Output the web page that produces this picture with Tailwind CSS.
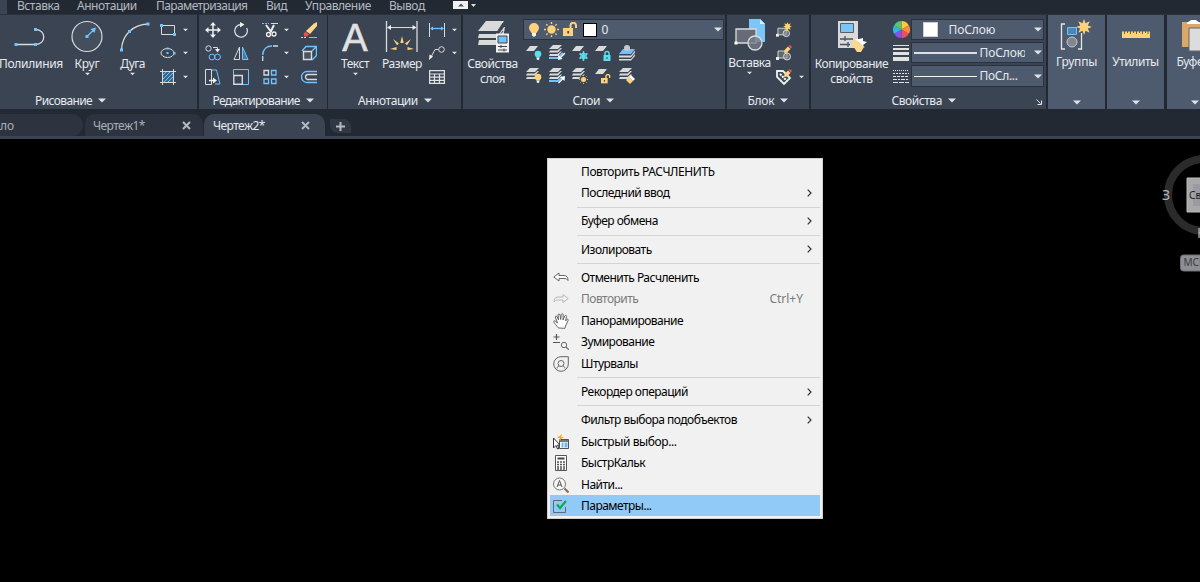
<!DOCTYPE html>
<html lang="ru">
<head>
    <meta charset="UTF-8">
    <meta name="viewport" content="width=device-width, initial-scale=1.0">
    <title>Чертеж2</title>
    <script src="https://cdn.jsdelivr.net/npm/@tailwindcss/browser@4"></script>
</head>
<body class="bg-black overflow-hidden h-[582px] w-[1200px] relative font-['Noto_Sans','Open_Sans',sans-serif] text-[12px] leading-[14px] tracking-[-0.45px] text-[#e6e9ee] whitespace-nowrap">

    <!-- shared shapes -->
    <svg class="hidden">
        <symbol id="caret" viewBox="0 0 8 5"><path d="M0 0.5h8L4 4.5z" fill="#dfe2e6"/></symbol>
        <symbol id="sheet" viewBox="0 0 12 5"><path d="M4 0h8L8 5H0z" fill="#dadada"/></symbol>
        <symbol id="stack" viewBox="0 0 13 13"><g fill="#dadada"><path d="M4 0h9L9 4H0z"/><path d="M1 5.500h7.500l3-2.500h1.500L9 7.500H0z"/><path d="M1 9h7.500l3-2.500h1.500L9 11H0z"/></g></symbol>
        <symbol id="bulb" viewBox="0 0 12 16"><path d="M6 1a5 5 0 0 0-5 5c0 2 1.500 3 2.500 5h5c1-2 2.500-3 2.500-5a5 5 0 0 0-5-5z" fill="currentColor"/><path d="M4 11h4v2.500L6 15l-2-1.500z" fill="#f4f4f4"/></symbol>
        <symbol id="sun" viewBox="0 0 16 16"><circle cx="8" cy="8" r="4.500" fill="#ffd27a"/><path d="M8 0v2M8 14v2M0 8h2M14 8h2M2.500 2.500l1.300 1.300M12.200 12.200l1.300 1.300M2.500 13.500l1.300-1.300M12.200 3.800l1.300-1.300" stroke="#ffd27a" stroke-width="1.500"/></symbol>
        <symbol id="unlock" viewBox="0 0 15 15"><path d="M0 6h10v8H0z" fill="#ffd27a"/><path d="M7.500 7V3.500a2.500 2.500 0 0 1 5.500 0V6" fill="none" stroke="#ffd27a" stroke-width="2"/><path d="M4.300 9h1.800v2.500H4.300z" fill="#4a4a44"/></symbol>
        <symbol id="block" viewBox="0 0 16 12"><path d="M2 2h9v7H2z" fill="#5f6773" stroke="#d4d4d4"/><circle cx="11" cy="7.500" r="3.500" fill="#8f949b" fill-opacity=".6" stroke="#d4d4d4"/><path d="M0 8h3v3H0z" fill="#eee"/></symbol>
        <symbol id="pencil" viewBox="0 0 8 8"><path d="M0 8l.5-3L4 1.500 6.500 4 3 7.500z" fill="#ffd27a"/><path d="M4.500 1L6 0l2 2-1 1.500z" fill="#f0504a"/></symbol>
        <symbol id="spark" viewBox="0 0 16 16"><path d="M8 0l1.500 4.200L13.700 2.300 11.800 6.500 16 8l-4.200 1.500 1.900 4.200-4.200-1.900L8 16l-1.500-4.200-4.200 1.900 1.900-4.200L0 8l4.200-1.500-1.900-4.200 4.200 1.900z" fill="#ffd27a"/></symbol>
    </svg>

    <!-- ribbon tab titles -->
    <div class="flex h-[14px] pl-[7px] bg-[#3b4453]">
        <div class="flex flex-1 h-[14px] bg-[#222933] text-[#b4b9c1] leading-[11px] pl-[10px]">
            <span class="w-[60px]">Вставка</span>
            <span class="w-[79px]">Аннотации</span>
            <span class="w-[110px] tracking-[-0.6px]">Параметризация</span>
            <span class="w-[39px]">Вид</span>
            <span class="w-[84px]">Управление</span>
            <span class="w-[64px]">Вывод</span>
            <svg class="w-[24px] h-[10px]" viewBox="0 0 24 10"><path d="M0 1h15v8H0z" fill="#f2f2f2"/><path d="M5 6.500h6L8 3.500z" fill="#555"/><path d="M18 4h5l-2.500 3z" fill="#dfe2e6"/></svg>
        </div>
    </div>

    <!-- ribbon -->
    <div class="flex h-[100px] bg-[#222933] border-t border-[#2b323d]">

        <div class="w-[197px] h-[94px] shrink-0 bg-[#3b4453] mr-[1.500px] flex flex-col">
            <div class="flex h-[78px] pt-[3px]">
                <div class="w-[62px] flex flex-col items-center pt-px">
                    <svg class="w-[36px] h-[37px] mb-px shrink-0" viewBox="0 0 36 37"><path d="M3 25.500h19.500c11 0 11-15 0-15" fill="none" stroke="#d8dadd" stroke-width="1.300"/><path d="M1.500 24h3v3h-3zM21 24h3v3h-3zM21 9h3v3h-3z" fill="#6fc3ff"/></svg>
                    <span class="tracking-[-0.3px]">Полилиния</span>
                </div>
                <div class="w-[50px] flex flex-col items-center pt-px">
                    <svg class="w-[36px] h-[37px] mb-px shrink-0" viewBox="0 0 36 37"><circle cx="18" cy="17.500" r="15" fill="#454e5c" stroke="#d8dadd" stroke-width="1.200"/><path d="M18 17.500l7-7" stroke="#6fc3ff" stroke-width="1.200"/><path d="M16.500 16h3v3h-3zM27 8.500l-1.500 5.500-4-4z" fill="#6fc3ff"/></svg>
                    <span class="tracking-[-0.2px]">Круг</span>
                    <svg class="w-[5px] h-[4px] mt-[1px]"><use href="#caret"/></svg>
                </div>
                <div class="w-[41px] flex flex-col items-center pt-px">
                    <svg class="w-[36px] h-[37px] mb-px shrink-0" viewBox="0 0 36 37"><path d="M6.500 31C7 16 18 5.500 33 5" fill="none" stroke="#d8dadd" stroke-width="1.300"/><path d="M5 29.500h3v3H5zM13 11h3v3h-3zM31.500 3.500h3v3h-3z" fill="#6fc3ff"/></svg>
                    <span class="tracking-[-0.7px]">Дуга</span>
                    <svg class="w-[5px] h-[4px] mt-[1px]"><use href="#caret"/></svg>
                </div>
                <div class="pl-[7px] flex flex-col">
                    <div class="flex items-center h-[23.500px] gap-[7px]"><svg class="size-4" viewBox="0 0 16 16"><path d="M1.500 3.500h13v9h-13z" fill="none" stroke="#d8dadd"/><path d="M0 2h3v3H0zM13 11h3v3h-3z" fill="#6fc3ff"/></svg><svg class="w-[5px] h-[4px]"><use href="#caret"/></svg></div>
                    <div class="flex items-center h-[23.500px] gap-[7px]"><svg class="size-4" viewBox="0 0 16 16"><ellipse cx="7.500" cy="8" rx="6.500" ry="4.500" fill="none" stroke="#d8dadd"/><path d="M6.500 2.500h2v2h-2zM6.500 7h2v2h-2zM13 7h2.500v2.500H13z" fill="#6fc3ff"/></svg><svg class="w-[5px] h-[4px]"><use href="#caret"/></svg></div>
                    <div class="flex items-center h-[23.500px] gap-[7px]"><svg class="size-4" viewBox="0 0 16 16"><path d="M3 3h10v10H3z" fill="#38648a"/><path d="M3 6l3-3M3 10l7-7M4 13l9-9M8 13l5-5" stroke="#6fc3ff"/><path d="M2.500 0v16M13.500 0v16M0 2.500h16M0 13.500h16" stroke="#d8dadd"/></svg><svg class="w-[5px] h-[4px]"><use href="#caret"/></svg></div>
                </div>
            </div>
            <div class="flex items-center h-[15px] pl-[35px] gap-[6px]"><span class="tracking-[-0.6px]">Рисование</span><svg class="w-[8px] h-[5px]"><use href="#caret"/></svg></div>
        </div>

        <div class="w-[128px] h-[94px] shrink-0 bg-[#3b4453] mr-[1.500px] flex flex-col">
            <div class="grid grid-cols-[28px_29px_40px_20px] grid-rows-[23.5px_23.5px_23.5px] items-center h-[78px] pt-[3px] pl-[6px]">
                <svg class="size-4" viewBox="0 0 16 16"><path d="M8 2v12M2 8h12" stroke="#f0f0f0" stroke-width="1.500"/><path d="M8 0l3 3.500H5zM8 16l3-3.500H5zM0 8l3.500-3v6zM16 8l-3.500-3v6z" fill="#f0f0f0"/></svg>
                <svg class="size-4" viewBox="0 0 16 16"><path d="M8 2.500a6.300 6.300 0 1 0 5.700 3.500" fill="none" stroke="#d8dadd" stroke-width="1.300"/><path d="M7 0l4.500 2.500L7 5.500z" fill="#eee"/></svg>
                <div class="flex items-center gap-[6px]"><svg class="size-4" viewBox="0 0 16 16"><path d="M0 1.500h7" stroke="#6fc3ff" stroke-dasharray="2 1"/><path d="M9 1.500h7" stroke="#d8dadd"/><path d="M4 3l5.500 7.500M12 3L8.500 10" stroke="#f0f0f0" stroke-width="2"/><circle cx="6.500" cy="12.500" r="2" fill="none" stroke="#f0f0f0" stroke-width="1.300"/><circle cx="12" cy="12" r="2" fill="none" stroke="#f0f0f0" stroke-width="1.300"/></svg><svg class="w-[5px] h-[4px]"><use href="#caret"/></svg></div>
                <svg class="size-4 -ml-px" viewBox="0 0 16 16"><path d="M5 9L13 1.500 16 0v4L9 12z" fill="#ffd98a"/><path d="M4.500 9.500L8 12.500 6 14.500H3.500L2.500 12z" fill="#f0504a"/><path d="M0 15.500h6" stroke="#d8dadd" stroke-dasharray="2 1"/><path d="M8 15.500h8" stroke="#6fc3ff"/></svg>

                <svg class="size-4" viewBox="0 0 16 16"><circle cx="3.500" cy="3.500" r="2.700" fill="none" stroke="#d8dadd"/><circle cx="7" cy="12" r="2.900" fill="none" stroke="#6fc3ff"/><circle cx="12.500" cy="12" r="2.900" fill="none" stroke="#6fc3ff"/><path d="M8 2.500h4.500V5" fill="none" stroke="#d8dadd"/><path d="M10 4h5l-2.500 3.500z" fill="#f0f0f0"/></svg>
                <svg class="size-4" viewBox="0 0 16 16"><path d="M6.500 2v12.500H1z" fill="none" stroke="#d8dadd"/><path d="M9.500 2v12.500H15z" fill="#49799f" stroke="#6fc3ff"/></svg>
                <div class="flex items-center gap-[6px]"><svg class="size-4" viewBox="0 0 16 16"><path d="M.7 16V11M11 1h5" stroke="#d8dadd" stroke-width="1.300"/><path d="M.7 10C1 4 5 1 10 1" fill="none" stroke="#6fc3ff" stroke-width="1.500"/></svg><svg class="w-[5px] h-[4px]"><use href="#caret"/></svg></div>
                <svg class="size-4 -ml-px" viewBox="0 0 16 16"><path d="M1 6l4-4.500h10.500v9L11 15M11 6l4-4" fill="none" stroke="#6fc3ff" stroke-width="1.400"/><path d="M2.500 6.500h8v8h-8z" fill="#4c5562" stroke="#d8dadd" stroke-width="1.400"/></svg>

                <svg class="size-4" viewBox="0 0 16 16"><path d="M.5.500h6v15h-6z" fill="none" stroke="#d8dadd"/><path d="M7 1h4.500l3.500 14H10" fill="none" stroke="#6fc3ff"/><path d="M4 11.500h5" stroke="#eee" stroke-width="1.500"/><path d="M8 8.500l4 3-4 3z" fill="#eee"/></svg>
                <svg class="size-4" viewBox="0 0 16 16"><path d="M.5 6V.500h15v15H10" fill="none" stroke="#6fc3ff"/><path d="M.8 6.500h8.500v8.700H.8z" fill="none" stroke="#d8dadd" stroke-width="1.400"/></svg>
                <div class="flex items-center gap-[6px]"><svg class="size-4" viewBox="0 0 16 16"><path d="M2 1.500h4.500V6H2z" fill="none" stroke="#d8dadd" stroke-width="1.300"/><path d="M9.500 1.500H14V6H9.500zM2 10h4.500v4.500H2zM9.500 10H14v4.500H9.500z" fill="none" stroke="#6fc3ff" stroke-width="1.300"/></svg><svg class="w-[5px] h-[4px]"><use href="#caret"/></svg></div>
                <svg class="size-4 -ml-px" viewBox="0 0 16 16"><path d="M16 2.500H6a5.500 5.500 0 0 0 0 11h10" fill="none" stroke="#6fc3ff" stroke-width="1.300"/><path d="M16 5.500H7a2.500 2.500 0 0 0 0 5h9" fill="none" stroke="#d8dadd" stroke-width="1.300"/></svg>
            </div>
            <div class="flex items-center h-[15px] pl-[14px] gap-[6px]"><span class="tracking-[-0.65px]">Редактирование</span><svg class="w-[8px] h-[5px]"><use href="#caret"/></svg></div>
        </div>

        <div class="w-[133px] h-[94px] shrink-0 bg-[#3b4453] mr-[1.500px] flex flex-col">
            <div class="flex h-[78px] pt-[3px]">
                <div class="w-[54px] flex flex-col items-center pt-px">
                    <svg class="w-[36px] h-[37px] mb-px shrink-0" viewBox="0 0 36 37"><text x="18" y="32" text-anchor="middle" font-family="Liberation Sans" font-size="38" letter-spacing="0" fill="#e2e2e2" stroke="#e2e2e2" stroke-width=".6">A</text></svg>
                    <span>Текст</span>
                    <svg class="w-[5px] h-[4px] mt-[1px]"><use href="#caret"/></svg>
                </div>
                <div class="w-[40px] flex flex-col items-center pt-px">
                    <svg class="w-[36px] h-[37px] mb-px shrink-0" viewBox="0 0 36 37"><path d="M2.500 2v31M33 2v31" stroke="#d8dadd" stroke-width="1.300"/><path d="M5 8.500h26" stroke="#d8dadd"/><path d="M3 8.500L7 6v5zM32.500 8.500L28.500 6v5z" fill="#eee"/><path d="M18 17l1.700 7h-3.400zM9 20l6 4.500-2 1.800zM27 20l-6 4.500 2 1.800zM6 30l6.500-2v3zM30 30l-6.500-2v3z" fill="#ffd27a"/></svg>
                    <span>Размер</span>
                </div>
                <div class="pl-[7px] flex flex-col">
                    <div class="flex items-center h-[23.500px] gap-[7px]"><svg class="size-4" viewBox="0 0 16 16"><path d="M.5 1v14M15.500 1v14" stroke="#d8dadd"/><path d="M2 6.500h12" stroke="#6fc3ff" stroke-width="1.300"/><path d="M1 6.500l3-2v4zM15 6.500l-3-2v4z" fill="#6fc3ff"/></svg><svg class="w-[5px] h-[4px]"><use href="#caret"/></svg></div>
                    <div class="flex items-center h-[23.500px] gap-[7px]"><svg class="size-4" viewBox="0 0 16 16"><circle cx="12.500" cy="4.500" r="2.800" fill="none" stroke="#d8dadd"/><path d="M9.500 4.500H6L2 12" fill="none" stroke="#d8dadd"/><path d="M0 15l.500-5.500 3.500 2z" fill="#eee"/></svg><svg class="w-[5px] h-[4px]"><use href="#caret"/></svg></div>
                    <div class="flex items-center h-[23.500px]"><svg class="size-4" viewBox="0 0 16 16"><path d="M.6 1.600h14.800v12.800H.6zM.6 5h14.800M.6 8.200h14.800M.6 11.300h14.800M5.500 5v9M10.500 5v9" fill="none" stroke="#e2e2e2" stroke-width="1.200"/></svg></div>
                </div>
            </div>
            <div class="flex items-center h-[15px] pl-[30px] gap-[6px]"><span>Аннотации</span><svg class="w-[8px] h-[5px]"><use href="#caret"/></svg></div>
        </div>

        <div class="w-[262.500px] h-[94px] shrink-0 bg-[#3b4453] mr-[1.500px] flex flex-col">
            <div class="flex h-[78px] pt-[3px]">
                <div class="w-[60px] flex flex-col items-center text-center pt-px leading-[15px]">
                    <svg class="w-[36px] h-[37px] shrink-0" viewBox="0 0 36 37"><g fill="#dadada"><path d="M11 2h18l-6 10H3z"/><path d="M4 15h20l5-7h1l-2 11H3z"/><path d="M4 21h18v5H3z"/></g><path d="M3 13h19l6-9" fill="none" stroke="#3b4453"/><path d="M3 20h19l6-8" fill="none" stroke="#3b4453"/><path d="M21 14.500h13v19H21z" fill="#f0f0f0"/><path d="M23 17h9v7h-9z" fill="#6fc3ff" stroke="#444"/><path d="M23 27.500h9M26 26v3M23 31h9M29 29.500v3" stroke="#444"/></svg>
                    <span>Свойства<br>слоя</span>
                </div>
                <div class="flex flex-col">
                    <div class="flex items-center w-[201px] h-[21px] mt-[1px] px-[4px] bg-[#4e5a6d] border border-[#2b323d]">
                        <svg class="w-[12px] h-[16px] text-[#ffd27a]"><use href="#bulb"/></svg>
                        <svg class="w-[15px] h-[15px] ml-[4px]"><use href="#sun"/></svg>
                        <svg class="w-[15px] h-[15px] ml-[4px]"><use href="#unlock"/></svg>
                        <span class="size-[14px] ml-[5px] bg-white border border-black"></span>
                        <span class="ml-[5px] flex-1">0</span>
                        <svg class="w-[8px] h-[5px] -mr-[3px]"><use href="#caret"/></svg>
                    </div>
                    <div class="flex gap-[7.300px] pl-[3px] mt-[5px]">
                        <svg class="size-4" viewBox="0 0 16 16"><use href="#sheet" width="12" height="5" y="1"/><use href="#bulb" x="8" y="5" width="8" height="11" class="text-[#5be0ea]"/></svg>
                        <svg class="size-4" viewBox="0 0 16 16"><use href="#stack" width="13" height="13"/><path d="M0 13h9l5-5" stroke="#6fc3ff" stroke-width="2" fill="none"/><path d="M16 8l-5 5" stroke="#fff" stroke-width="1.300"/><path d="M9 15l.500-5 4 4z" fill="#fff"/></svg>
                        <svg class="size-4" viewBox="0 0 16 16"><use href="#sheet" width="12" height="5" y="1"/><path d="M11.500 6v10M7.500 8.500l8 5M7.500 13.500l8-5" stroke="#5be0ea" stroke-width="1.600"/><circle cx="11.500" cy="11" r="2.800" fill="none" stroke="#5be0ea"/></svg>
                        <svg class="size-4" viewBox="0 0 16 16"><use href="#sheet" width="12" height="5" y="1"/><path d="M8.500 10h7v6h-7z" fill="#5be0ea"/><path d="M10 10V8.500a2 2 0 0 1 4 0V10" fill="none" stroke="#5be0ea" stroke-width="1.400"/><path d="M11.500 12h1v2h-1z" fill="#3b4453"/></svg>
                        <svg class="size-4" viewBox="0 0 16 16"><path d="M4 4h12l-4 5H0z" fill="#6fc3ff"/><circle cx="8" cy="3" r="3" fill="#c8c8c8"/><path d="M0 10.500h12l4-5v2l-4 5H0zM0 14h12l4-5v2l-4 4.500H0z" fill="#dadada"/></svg>
                    </div>
                    <div class="flex gap-[7.300px] pl-[3px] mt-[7px]">
                        <svg class="size-4" viewBox="0 0 16 16"><use href="#stack" width="13" height="13"/><use href="#bulb" x="8" y="5" width="8" height="11" class="text-[#ffd27a]"/></svg>
                        <svg class="size-4" viewBox="0 0 16 16"><use href="#stack" width="13" height="13"/><path d="M0 13h9l4-4" stroke="#6fc3ff" stroke-width="2" fill="none"/><path d="M9.500 15l5-5" stroke="#fff" stroke-width="1.300"/><path d="M16 8l-.5 5-4.500-4z" fill="#fff"/></svg>
                        <svg class="size-4" viewBox="0 0 16 16"><use href="#stack" width="13" height="13"/><circle cx="11.500" cy="11.500" r="4" fill="#3b4453"/><use href="#sun" x="7" y="7" width="9" height="9"/></svg>
                        <svg class="size-4" viewBox="0 0 16 16"><use href="#sheet" width="12" height="5" y="1"/><use href="#unlock" x="6" y="6" width="10" height="10"/></svg>
                        <svg class="size-4" viewBox="0 0 16 16"><use href="#stack" width="13" height="13"/><path d="M7 12l3-3 4 4-3 3z" fill="#ffd27a"/><path d="M10 9l2-2 4 4-2 2z" fill="#fff"/></svg>
                    </div>
                </div>
            </div>
            <div class="flex items-center h-[15px] pl-[110px] gap-[6px]"><span>Слои</span><svg class="w-[8px] h-[5px]"><use href="#caret"/></svg></div>
        </div>

        <div class="w-[82.500px] h-[94px] shrink-0 bg-[#3b4453] mr-[1.500px] flex flex-col">
            <div class="flex h-[78px] pt-[3px]">
                <div class="w-[46px] flex flex-col items-center pt-px">
                    <svg class="w-[36px] h-[36px] mb-px shrink-0" viewBox="0 0 36 36"><path d="M17 0h11l5 5v18H17z" fill="#7cc5f7"/><path d="M28 0v5h5z" fill="#d9efff"/><path d="M4 10h20v14H4z" fill="#666b76" stroke="#dcdcdc" stroke-width="1.300"/><circle cx="23" cy="24" r="7" fill="#777d88" fill-opacity=".8" stroke="#dcdcdc" stroke-width="1.300"/><path d="M2.500 22.500h3v3h-3z" fill="#fff"/></svg>
                    <span>Вставка</span>
                    <svg class="w-[5px] h-[4px] mt-[1px]"><use href="#caret"/></svg>
                </div>
                <div class="pl-[3px] flex flex-col">
                    <div class="flex items-center h-[23.500px]"><svg class="size-4" viewBox="0 0 16 16"><use href="#block" y="4" width="15" height="12"/><use href="#spark" x="7" width="9" height="9"/></svg></div>
                    <div class="flex items-center h-[23.500px]"><svg class="size-4" viewBox="0 0 16 16"><use href="#block" y="4" width="16" height="12"/><use href="#pencil" x="8" width="8" height="8"/></svg></div>
                    <div class="flex items-center h-[23.500px] gap-[7px]"><svg class="size-4" viewBox="0 0 16 16"><path d="M1 2h6l7 7-6 6-7-7z" fill="#444b57" stroke="#f0f0f0" stroke-width="1.800"/><path d="M4 5l6 6" stroke="#fff" stroke-width="2" stroke-dasharray="2 1"/><use href="#pencil" x="8" width="8" height="8"/></svg><svg class="w-[5px] h-[4px]"><use href="#caret"/></svg></div>
                </div>
            </div>
            <div class="flex items-center h-[15px] pl-[21px] gap-[6px]"><span class="tracking-[-0.3px]">Блок</span><svg class="w-[8px] h-[5px]"><use href="#caret"/></svg></div>
        </div>

        <div class="w-[235px] h-[94px] shrink-0 bg-[#3b4453] mr-[2.500px] flex flex-col">
            <div class="flex h-[78px] pt-[3px]">
                <div class="w-[82px] flex flex-col items-center text-center pt-px leading-[15px]">
                    <svg class="w-[36px] h-[37px] shrink-0" viewBox="0 0 36 37"><path d="M4 2h20v27H4z" fill="#dadada"/><path d="M6.500 4.500h13v9h-13z" fill="#7cc5f7" stroke="#55606c"/><path d="M6 20h13M6 25.500h10M11 17v5M14 23v5" stroke="#4a525e" stroke-width="1.300"/><path d="M17 24l4-4 9 8-3 5h-4z" fill="#ffd98a"/><path d="M21 20l4 0 4-1 0 3 4 1-4 3 2 3z" fill="#fff"/></svg>
                    <span>Копирование<br>свойств</span>
                </div>
                <div class="flex flex-col items-center w-[17px]">
                    <div class="flex items-center h-[22px]"><svg class="size-[17px]" viewBox="-8 -8 16 16"><path d="M0 0V-8A8 8 0 0 1 6.900-4z" fill="#ffc83d"/><path d="M0 0L6.900-4A8 8 0 0 1 6.900 4z" fill="#ff8a3c"/><path d="M0 0L6.900 4A8 8 0 0 1 0 8z" fill="#f0505a"/><path d="M0 0V8A8 8 0 0 1-6.900 4z" fill="#8a4df0"/><path d="M0 0L-6.900 4A8 8 0 0 1-6.900-4z" fill="#2fb8d8"/><path d="M0 0L-6.900-4A8 8 0 0 1 0-8z" fill="#5cc56a"/></svg></div>
                    <div class="flex items-center h-[24px] mt-[1px]"><svg class="size-4" viewBox="0 0 16 16"><path d="M0 .5h16M0 4h16M0 8.300h16M0 14h16" stroke="#e2e2e2"/><path d="M0 3h16v2H0zM0 7h16v3H0zM0 12h16v4H0z" fill="#e2e2e2"/></svg></div>
                    <div class="flex items-center h-[22px]"><svg class="size-4" viewBox="0 0 16 16" stroke="#e2e2e2"><path d="M0 2.500h16" stroke-dasharray="1 1"/><path d="M0 5.500h16" stroke-dasharray="2 1"/><path d="M0 8.500h16" stroke-dasharray="3 1"/><path d="M0 11.500h16" stroke-dasharray="4 1 2 1"/><path d="M0 14.500h16" stroke-dasharray="5 1"/></svg></div>
                </div>
                <div class="flex flex-col gap-[2px] ml-px mt-[1px]">
                    <div class="flex items-center w-[133px] h-[21px] pl-[11px] pr-[1px] bg-[#4e5a6d] border border-[#2b323d]"><span class="size-[15px] bg-white border border-[#cfcfcf]"></span><span class="ml-[11px] flex-1 tracking-[-0.1px]">ПоСлою</span><svg class="w-[8px] h-[5px]"><use href="#caret"/></svg></div>
                    <div class="flex items-center w-[133px] h-[21px] pl-[2px] pr-[1px] bg-[#4e5a6d] border border-[#2b323d]"><span class="w-[63px] h-[2px] bg-[#dcdfe3]"></span><span class="ml-[3px] w-[45px] overflow-hidden tracking-[-0.1px]">ПоСлою</span><svg class="w-[8px] h-[5px] ml-auto"><use href="#caret"/></svg></div>
                    <div class="flex items-center w-[133px] h-[22px] pl-[2px] pr-[1px] bg-[#4e5a6d] border border-[#2b323d]"><span class="w-[63px] h-px bg-[#f2f2f2]"></span><span class="ml-[3px] flex-1 tracking-[-0.3px]">ПоСл...</span><svg class="w-[8px] h-[5px]"><use href="#caret"/></svg></div>
                </div>
            </div>
            <div class="flex items-center h-[15px] pl-[81px] gap-[6px]"><span>Свойства</span><svg class="w-[8px] h-[5px]"><use href="#caret"/></svg><svg class="w-[6px] h-[6px] ml-auto mr-[4px] mt-[3px]" viewBox="0 0 6 6"><path d="M.5.500l4 4M5.500 1.500v4h-4" fill="none" stroke="#dfe2e6"/></svg></div>
        </div>

        <!-- collapsed panels -->
        <div class="w-[57px] h-[94px] shrink-0 bg-[#4e5a6d] mr-[2px] flex flex-col items-center pt-[4px]">
            <svg class="w-[36px] h-[35px] mb-px shrink-0" viewBox="0 0 36 35"><path d="M6 5H2.500v25H6M19 30h3.500V14" fill="none" stroke="#e6e6e6" stroke-width="1.300"/><path d="M8.500 8.500h9v7h-9z" fill="#4d88b5" stroke="#6fc3ff"/><circle cx="13" cy="23" r="5" fill="#808791" stroke="#c8c8c8"/><use href="#spark" x="17" y="0" width="16" height="16"/></svg>
            <span class="tracking-[-0.2px]">Группы</span>
            <svg class="w-[8px] h-[5px] mt-auto mb-[4px]"><use href="#caret"/></svg>
        </div>
        <div class="w-[57px] h-[94px] shrink-0 bg-[#4e5a6d] mr-[2.500px] flex flex-col items-center pt-[4px]">
            <svg class="w-[36px] h-[35px] mb-px shrink-0" viewBox="0 0 36 35"><path d="M4 12.500h28v6.500H4z" fill="#ffd27a"/><path d="M6.500 12v3M9.500 12v2M12.500 12v3M15.500 12v2M18.500 12v3M21.500 12v2M24.500 12v3M27.500 12v2M30 12v3" stroke="#6b6250"/></svg>
            <span>Утилиты</span>
            <svg class="w-[8px] h-[5px] mt-auto mb-[4px]"><use href="#caret"/></svg>
        </div>
        <div class="w-[57px] h-[94px] shrink-0 bg-[#4e5a6d] flex flex-col items-center pt-[4px]">
            <svg class="w-[36px] h-[35px] mb-px shrink-0" viewBox="0 0 36 35"><path d="M5 3h25v25H5z" fill="#dba869"/><path d="M12 9h18v23H12z" fill="#dcdcdc" stroke="#666"/><path d="M10 5c0-3 3-2 4-4h5c1 2 4 1 4 4z" fill="#fff"/></svg>
            <span class="w-[45px] ml-[8px]">Буфер</span>
            <svg class="w-[8px] h-[5px] mt-auto mb-[4px]"><use href="#caret"/></svg>
        </div>
    </div>

    <!-- file tabs -->
    <div class="flex h-[25px] bg-[#222933] text-[#a9afb8] border-b-[3px] border-[#3b4453]">
        <div class="flex items-center w-[83px] h-[22px] pt-px bg-[#2d3440] rounded-r-[12px]"><span class="tracking-normal">ло</span></div>
        <div class="flex items-center w-[118px] h-[22px] ml-[2px] pt-px pl-[8px] pr-[12px] bg-[#2d3440] rounded-t-[10px]">
            <span class="flex-1 tracking-[-0.55px]">Чертеж1*</span>
            <svg class="size-[9px]" viewBox="0 0 9 9"><path d="M1 1l7 7M8 1L1 8" stroke="#b4b9c1" stroke-width="2"/></svg>
        </div>
        <div class="flex items-center w-[121px] h-[23px] ml-[1px] pl-[9px] pr-[15px] bg-[#3b4453] rounded-t-[10px] text-[#e6e9ee]">
            <span class="flex-1 tracking-[-0.55px]">Чертеж2*</span>
            <svg class="size-[9px]" viewBox="0 0 9 9"><path d="M1 1l7 7M8 1L1 8" stroke="#b4b9c1" stroke-width="2"/></svg>
        </div>
        <div class="flex items-center justify-center w-[21px] h-[14px] ml-[5px] mt-[5px] bg-[#303844] rounded-tr-[8px] rounded-bl-[8px]">
            <svg class="size-[9px]" viewBox="0 0 9 9"><path d="M4.500 0v9M0 4.500h9" stroke="#b4b9c1" stroke-width="2"/></svg>
        </div>
    </div>

    <!-- view cube -->
    <div class="absolute left-[1155px] top-[150px] w-[45px] h-[125px] overflow-hidden tracking-normal">
        <svg class="w-[45px] h-[125px]" viewBox="0 0 45 125">
            <circle cx="49" cy="45" r="36" fill="none" stroke="#2b2b2b" stroke-width="8"/>
            <path d="M32 28h20v34H32z" fill="#a8a8a8" stroke="#bcbcbc"/>
            <path d="M38 34h14v22H38z" fill="#9a9aa2"/>
            <rect x="25.500" y="105" width="40" height="16" rx="3" fill="#8e8e96" stroke="#6e6e74"/>
            <text x="7" y="50" font-size="14" fill="#b4b4b4">З</text>
            <text x="34" y="49" font-size="10" fill="#222">Св</text>
            <text x="42" y="88" font-size="14" fill="#b4b4b4">Ю</text>
            <text x="28.500" y="116" font-size="10" fill="#3c3c42">МСК</text>
        </svg>
    </div>

    <!-- context menu -->
    <div class="absolute left-[547px] top-[158px] w-[276px] h-[361px] bg-[#f1f1f1] border border-[#cfcfcf] pt-[1.500px] px-[2px] text-black tracking-[-0.52px]">
        <div class="flex items-center h-[21.500px] pt-px pl-[31px] tracking-[-0.42px]">Повторить РАСЧЛЕНИТЬ</div>
        <div class="flex items-center h-[21.500px] pt-px pl-[31px] pr-[8px]"><span class="flex-1">Последний ввод</span><svg class="w-[5px] h-[8px] -mt-px" viewBox="0 0 5 8"><path d="M.7.700L4 4 .7 7.300" fill="none" stroke="#333" stroke-width="1.200"/></svg></div>
        <div class="h-[6.700px] pt-[3px] pl-[27px]"><div class="h-px bg-[#d4d4d4]"></div></div>
        <div class="flex items-center h-[21.500px] pt-px pl-[31px] pr-[8px]"><span class="flex-1">Буфер обмена</span><svg class="w-[5px] h-[8px] -mt-px" viewBox="0 0 5 8"><path d="M.7.700L4 4 .7 7.300" fill="none" stroke="#333" stroke-width="1.200"/></svg></div>
        <div class="h-[6.700px] pt-[3px] pl-[27px]"><div class="h-px bg-[#d4d4d4]"></div></div>
        <div class="flex items-center h-[21.500px] pt-px pl-[31px] pr-[8px]"><span class="flex-1">Изолировать</span><svg class="w-[5px] h-[8px] -mt-px" viewBox="0 0 5 8"><path d="M.7.700L4 4 .7 7.300" fill="none" stroke="#333" stroke-width="1.200"/></svg></div>
        <div class="h-[6.700px] pt-[3px] pl-[27px]"><div class="h-px bg-[#d4d4d4]"></div></div>
        <div class="flex items-center h-[21.500px] pt-px pl-[3px] gap-[12px]"><svg class="size-4" viewBox="0 0 16 16"><path d="M.8 7L6 3v2.500h5c3 0 4 2 4 5-1-1.500-2-2-4-2H6V11z" fill="#fff" stroke="#666"/></svg>Отменить Расчленить</div>
        <div class="flex items-center h-[21.500px] pt-px pl-[3px] pr-[17px] gap-[12px] text-[#7a7a7a]"><svg class="size-4" viewBox="0 0 16 16"><path d="M15.200 7.500L10 3.500V6H5c-3 0-4 2-4 5 1-1.500 2-2 4-2h5v2.500z" fill="none" stroke="#b8b8b8"/></svg><span class="flex-1">Повторить</span><span class="tracking-normal">Ctrl+Y</span></div>
        <div class="flex items-center h-[21.500px] pt-px pl-[3px] gap-[12px]"><svg class="size-4" viewBox="0 0 16 16"><path d="M5.500 15C4 13 1 10 .7 8.500c0-1 1.300-1 2 0L4.500 10 2.300 4c0-1.300 1.500-1.300 2 0l1.300 3L5 2c0-1.300 1.700-1.500 2 0l.7 4.500L8.300 1.500c.3-1.300 2-1 1.900.3L10 7l1.800-4c.5-1.200 2-.7 1.700.5L12.500 8l1.200-1.500c.9-.8 1.900 0 1.400 1L12.500 13l-.5 2.300z" fill="#fff" stroke="#666"/></svg>Панорамирование</div>
        <div class="flex items-center h-[21.500px] pt-px pl-[3px] gap-[12px]"><svg class="size-4" viewBox="0 0 16 16"><path d="M3.500 0v6M.5 3h6M0 8.500h7" stroke="#555" stroke-width="1.200"/><circle cx="11" cy="11" r="2.700" fill="none" stroke="#666"/><path d="M13 13l3 3" stroke="#8a7355" stroke-width="1.300"/></svg>Зумирование</div>
        <div class="flex items-center h-[21.500px] pt-px pl-[3px] gap-[12px]"><svg class="size-4" viewBox="0 0 16 16"><path d="M8 .7h7.300V8A7.300 7.300 0 1 1 8 .7z" fill="none" stroke="#666"/><circle cx="8" cy="7.500" r="3" fill="none" stroke="#666"/><path d="M4 12.500c0-1.500 1-2 2-2.300M12 12.500c0-1.500-1-2-2-2.300" fill="none" stroke="#666"/></svg>Штурвалы</div>
        <div class="h-[6.700px] pt-[3px] pl-[27px]"><div class="h-px bg-[#d4d4d4]"></div></div>
        <div class="flex items-center h-[21.500px] pt-px pl-[31px] pr-[8px]"><span class="flex-1">Рекордер операций</span><svg class="w-[5px] h-[8px] -mt-px" viewBox="0 0 5 8"><path d="M.7.700L4 4 .7 7.300" fill="none" stroke="#333" stroke-width="1.200"/></svg></div>
        <div class="h-[6.700px] pt-[3px] pl-[27px]"><div class="h-px bg-[#d4d4d4]"></div></div>
        <div class="flex items-center h-[21.500px] pt-px pl-[31px] pr-[8px]"><span class="flex-1">Фильтр выбора подобъектов</span><svg class="w-[5px] h-[8px] -mt-px" viewBox="0 0 5 8"><path d="M.7.700L4 4 .7 7.300" fill="none" stroke="#333" stroke-width="1.200"/></svg></div>
        <div class="flex items-center h-[21.500px] pt-px pl-[3px] gap-[12px] tracking-[-0.4px]"><svg class="size-4" viewBox="0 0 16 16"><path d="M6.500 5.500h9v9h-9z" fill="#fff" stroke="#555"/><path d="M7 6h8v2H7z" fill="#777"/><path d="M8.500 8.500h2v5h-2zM11.500 8.500h3v5h-3z" fill="#6fb7f0"/><path d="M.5 4v10l2.500-2.500 1.500 3.500 1.500-.7-1.500-3.300H7z" fill="#fff" stroke="#333"/><path d="M9 0L4 4h3l-1 3 4.500-4H8z" fill="#ffa51f"/></svg>Быстрый выбор...</div>
        <div class="flex items-center h-[21.500px] pt-px pl-[3px] gap-[12px]"><svg class="size-4" viewBox="0 0 16 16"><path d="M2.500.5h11v15h-11z" fill="#fff" stroke="#555"/><path d="M4.500 3.500h7" stroke="#444" stroke-width="2"/><path d="M4 7h8M4 9.500h8M4 12h8M4 14h8" stroke="#555" stroke-width="1.300" stroke-dasharray="2 1"/></svg>БыстрКальк</div>
        <div class="flex items-center h-[21.500px] pt-px pl-[3px] gap-[12px]"><svg class="size-4" viewBox="0 0 16 16"><circle cx="6.500" cy="7" r="6" fill="#f7f7f7" stroke="#777"/><path d="M4 10l2.500-6.500L9 10M5 8h3" fill="none" stroke="#555"/><path d="M11.500 11.500l4 4" stroke="#8a6a45" stroke-width="2"/></svg>Найти...</div>
        <div class="flex items-center h-[21.500px] pt-px pl-[3px] gap-[12px] bg-[#91c9f7]"><svg class="size-4" viewBox="0 0 16 16"><path d="M12.500 9v5.500H.5v-12H9" fill="none" stroke="#667"/><path d="M4 6.500l3 3.500 6-7" fill="none" stroke="#14a84b" stroke-width="2.200"/></svg>Параметры...</div>
    </div>

</body>
</html>
